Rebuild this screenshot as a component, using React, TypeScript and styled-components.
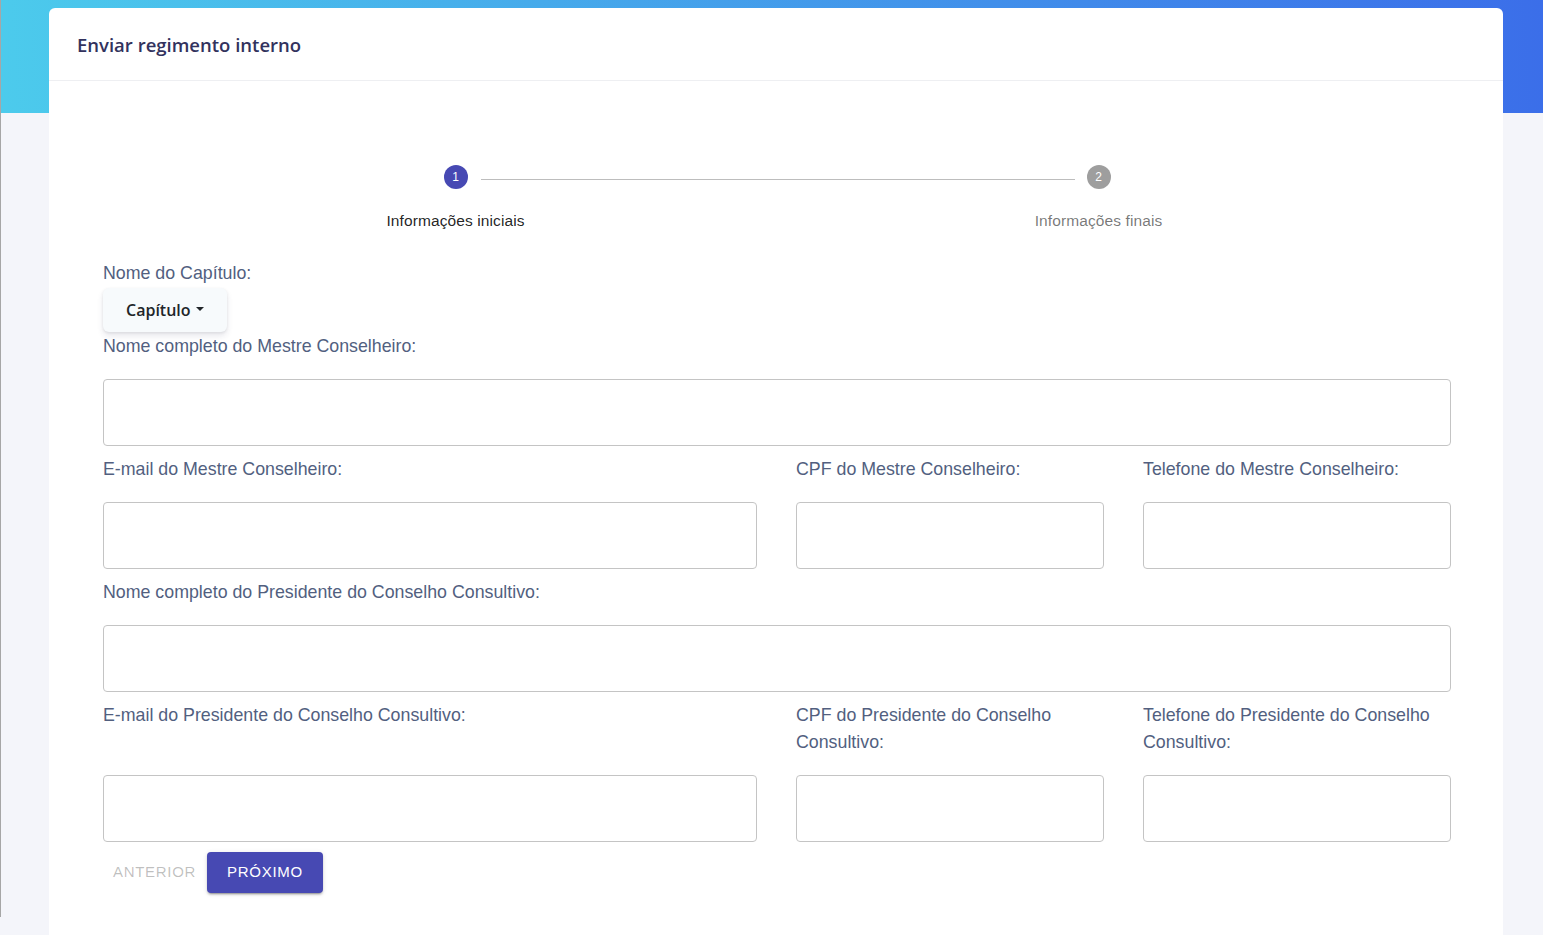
import React from "react";
import styled, { createGlobalStyle } from "styled-components";

const Global = createGlobalStyle`
  html, body { margin: 0; padding: 0; background: #f4f5fa; }
  * { box-sizing: border-box; }
`;

const Page = styled.div`
  min-height: 935px;
  background:
    linear-gradient(#a6a6a6, #a6a6a6) left top / 1px 917px no-repeat,
    linear-gradient(87deg, #4ccbec 0%, #3b6ee9 100%) left top / 100% 113px no-repeat,
    #f4f5fa;
  padding: 8px 40px 0 49px;
`;

const Card = styled.div`
  background: #fff;
  border-radius: 6px 6px 0 0;
  min-height: 927px;
`;

const CardHeader = styled.div`
  height: 73px;
  display: flex;
  align-items: center;
  padding: 0 28px;
  border-bottom: 1px solid #eeeff2;
`;

const Title = styled.h3`
  margin: 0;
  font-family: "Open Sans", sans-serif;
  font-weight: 600;
  font-size: 18.5px;
  color: #32325d;
`;

const CardBody = styled.div`
  padding: 84px 52px 40px 54px;
`;

const Stepper = styled.div`
  padding: 0 31px;
  margin-bottom: 28px;
  font-family: "Liberation Sans", Arial, sans-serif;
`;

const CircleRow = styled.div`
  display: flex;
  align-items: flex-start;
  padding: 0 calc(25% - 12px);
`;

const Circle = styled.div<{ $active?: boolean }>`
  width: 24px;
  height: 24px;
  border-radius: 50%;
  flex: none;
  background: ${(p) => (p.$active ? "#4749b3" : "#9e9e9e")};
  color: #fff;
  font-size: 12px;
  display: flex;
  align-items: center;
  justify-content: center;
`;

const Connector = styled.div`
  flex: 1;
  margin: 14px 12px 0 13px;
  border-top: 1px solid #bdbdbd;
`;

const LabelRow = styled.div`
  display: grid;
  grid-template-columns: 1fr 1fr;
  margin-top: 22px;
`;

const StepLabel = styled.div<{ $active?: boolean }>`
  text-align: center;
  font-size: 15.5px;
  line-height: 20px;
  letter-spacing: 0.1px;
  color: ${(p) => (p.$active ? "rgba(0,0,0,0.87)" : "rgba(0,0,0,0.54)")};
`;

const Label = styled.label`
  display: block;
  padding-top: 1px;
  font-family: "Liberation Sans", Arial, sans-serif;
  font-size: 17.8px;
  line-height: 27px;
  color: #525f7f;
`;

const Group = styled.div`
  display: flex;
  flex-direction: column;
  margin-bottom: 9px;
  ${Label} { flex: 1; margin-bottom: 19px; }
`;

const Input = styled.input`
  display: block;
  width: 100%;
  height: 67px;
  border: 1px solid #c4c4c4;
  border-radius: 4px;
  background: #fff;
  padding: 0 14px;
  font-size: 16px;
  outline: none;
`;

const Row = styled.div`
  display: grid;
  grid-template-columns: 654px 1fr 1fr;
  column-gap: 39px;
`;

const DropButton = styled.button`
  display: inline-flex;
  align-items: center;
  height: 44px;
  margin-top: 1px;
  padding: 0 23px;
  border: none;
  border-radius: 6px;
  background: #f7fafc;
  box-shadow: 0 4px 6px rgba(50, 50, 93, 0.11), 0 1px 3px rgba(0, 0, 0, 0.08);
  font-family: "Open Sans", sans-serif;
  font-weight: 600;
  font-size: 16px;
  color: #212529;
  cursor: pointer;
`;

const Caret = styled.span`
  display: inline-block;
  margin-left: 5px;
  border-top: 4.5px solid #212529;
  border-left: 4.5px solid transparent;
  border-right: 4.5px solid transparent;
  transform: translateY(-1px);
`;

const Capitulo = styled.div`
  display: flex;
  flex-direction: column;
  align-items: flex-start;
`;

const Actions = styled.div`
  display: flex;
  align-items: center;
  margin-top: 1px;
`;

const BaseButton = styled.button`
  font-family: "Liberation Sans", Arial, sans-serif;
  font-weight: 400;
  font-size: 15px;
  line-height: 24px;
  letter-spacing: 0.7px;
  text-transform: uppercase;
  border: none;
  border-radius: 4px;
  cursor: pointer;
  padding-bottom: 9px;
`;

const TextButton = styled(BaseButton)`
  background: transparent;
  color: rgba(0, 0, 0, 0.26);
  padding: 8px 11px 9px 10px;
`;

const PrimaryButton = styled(BaseButton)`
  background: #4749b3;
  color: #fff;
  padding: 8px 20px 9px;
  box-shadow: 0 3px 1px -2px rgba(0,0,0,0.2), 0 2px 2px 0 rgba(0,0,0,0.14), 0 1px 5px 0 rgba(0,0,0,0.12);
`;

export default function App() {
  return (
    <>
      <Global />
      <Page>
        <Card>
          <CardHeader>
            <Title>Enviar regimento interno</Title>
          </CardHeader>
          <CardBody>
            <Stepper>
              <CircleRow>
                <Circle $active>1</Circle>
                <Connector />
                <Circle>2</Circle>
              </CircleRow>
              <LabelRow>
                <StepLabel $active>Informações iniciais</StepLabel>
                <StepLabel>Informações finais</StepLabel>
              </LabelRow>
            </Stepper>

            <Capitulo>
              <Label>Nome do Capítulo:</Label>
              <DropButton>
                Capítulo
                <Caret />
              </DropButton>
            </Capitulo>

            <Group>
              <Label>Nome completo do Mestre Conselheiro:</Label>
              <Input />
            </Group>

            <Row>
              <Group>
                <Label>E-mail do Mestre Conselheiro:</Label>
                <Input />
              </Group>
              <Group>
                <Label>CPF do Mestre Conselheiro:</Label>
                <Input />
              </Group>
              <Group>
                <Label>Telefone do Mestre Conselheiro:</Label>
                <Input />
              </Group>
            </Row>

            <Group>
              <Label>Nome completo do Presidente do Conselho Consultivo:</Label>
              <Input />
            </Group>

            <Row>
              <Group>
                <Label>E-mail do Presidente do Conselho Consultivo:</Label>
                <Input />
              </Group>
              <Group>
                <Label>CPF do Presidente do Conselho Consultivo:</Label>
                <Input />
              </Group>
              <Group>
                <Label>Telefone do Presidente do Conselho Consultivo:</Label>
                <Input />
              </Group>
            </Row>

            <Actions>
              <TextButton disabled>Anterior</TextButton>
              <PrimaryButton>Próximo</PrimaryButton>
            </Actions>
          </CardBody>
        </Card>
      </Page>
    </>
  );
}
